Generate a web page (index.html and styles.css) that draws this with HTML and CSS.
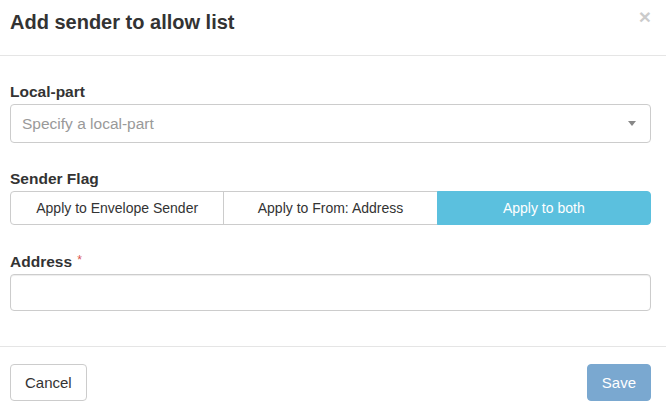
FILE: index.html
```html
<!DOCTYPE html>
<html lang="en">
<head>
  <meta charset="UTF-8">
  <title>Add sender to allow list</title>
  <link rel="stylesheet" href="styles.css">
</head>
<body>

<div class="modal">
  <div class="modal-header">
    <h4 class="modal-title">Add sender to allow list</h4>
    <span class="close">&times;</span>
  </div>

  <div class="modal-body">
    <label class="field-label">Local-part</label>
    <div class="select-box">
      <span class="placeholder">Specify a local-part</span>
      <span class="caret"></span>
    </div>

    <label class="field-label flag-label">Sender Flag</label>
    <div class="btn-group">
      <button class="seg">Apply to Envelope Sender</button>
      <button class="seg">Apply to From: Address</button>
      <button class="seg active">Apply to both</button>
    </div>

    <label class="field-label addr-label">Address <span class="required">*</span></label>
    <input type="text" class="text-input">
  </div>

  <div class="modal-footer">
    <button class="btn btn-default">Cancel</button>
    <button class="btn btn-primary" disabled>Save</button>
  </div>
</div>

</body>
</html>
```

FILE: styles.css
```css
body {
  margin: 0;
  font-family: "Liberation Sans", Arial, sans-serif;
  font-size: 14px;
  color: #333;
  background: #fff;
}
.modal {
  width: 666px;
  height: 417px;
  overflow: hidden;
}
.modal-header {
  display: flex;
  justify-content: space-between;
  align-items: flex-start;
  height: 56px;
  box-sizing: border-box;
  padding: 10px 15px 0 10px;
  border-bottom: 1px solid #e5e5e5;
}
.modal-title {
  margin: 0;
  font-size: 20px;
  font-weight: bold;
  line-height: 24px;
  color: #333;
}
.close {
  font-size: 21px;
  font-weight: bold;
  line-height: 14px;
  color: #000;
  opacity: 0.2;
}
.modal-body {
  padding: 26px 15px 0 10px;
  height: 291px;
  box-sizing: border-box;
  border-bottom: 1px solid #e5e5e5;
}
.field-label {
  display: block;
  font-size: 15.5px;
  font-weight: bold;
  line-height: 20px;
  margin-bottom: 2px;
  color: #333;
}
.flag-label {
  margin-top: 26px;
  margin-bottom: 2px;
}
.addr-label {
  margin-top: 27px;
  margin-bottom: 2px;
}
.required {
  color: #d9534f;
  font-size: 12px;
  font-weight: normal;
  vertical-align: top;
  position: relative;
  top: -2px;
  margin-left: 1px;
}
.select-box {
  display: flex;
  align-items: center;
  justify-content: space-between;
  height: 39px;
  box-sizing: border-box;
  border: 1px solid #ccc;
  border-radius: 4px;
  padding: 0 14px 0 11px;
}
.placeholder {
  color: #999;
  font-size: 15.5px;
}
.caret {
  width: 0;
  height: 0;
  border-top: 5px solid #888;
  border-left: 4px solid transparent;
  border-right: 4px solid transparent;
}
.btn-group {
  display: flex;
  height: 34px;
}
.seg {
  flex: 1;
  font-family: inherit;
  font-size: 14px;
  color: #333;
  background: #fff;
  border: 1px solid #ccc;
  margin-left: -1px;
  padding: 0;
}
.seg:first-child {
  margin-left: 0;
  border-radius: 4px 0 0 4px;
}
.seg:last-child {
  border-radius: 0 4px 4px 0;
}
.seg.active {
  background: #5bc0de;
  border-color: #5bc0de;
  color: #fff;
}
.text-input {
  display: block;
  width: 100%;
  height: 37px;
  box-sizing: border-box;
  border: 1px solid #ccc;
  border-radius: 4px;
  box-shadow: inset 0 1px 1px rgba(0,0,0,0.075);
}
.modal-footer {
  display: flex;
  justify-content: space-between;
  padding: 17px 15px 0 10px;
}
.btn {
  font-family: inherit;
  font-size: 15px;
  height: 37px;
  padding: 0 14px;
  border-radius: 4px;
  border: 1px solid #ccc;
}
.btn-default {
  background: #fff;
  color: #333;
}
.btn-primary {
  background: #7aa8d0;
  border-color: #7aa8d0;
  color: #fff;
}
```
